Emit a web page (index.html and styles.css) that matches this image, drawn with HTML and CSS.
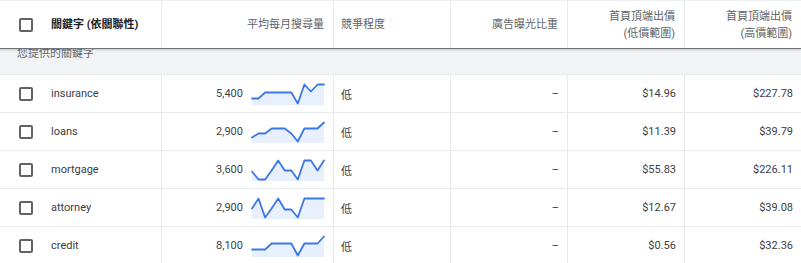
FILE: index.html
```html
<!DOCTYPE html>
<html lang="zh-Hant">
<head>
<meta charset="utf-8">
<title>關鍵字規劃工具</title>
<link rel="stylesheet" href="styles.css">
</head>
<body>
<div class="table">
  <div class="row head">
    <div class="cell first"><span class="cb"></span><span class="kw-head">關鍵字 (依關聯性)</span></div>
    <div class="cell right">平均每月搜尋量</div>
    <div class="cell left">競爭程度</div>
    <div class="cell right">廣告曝光比重</div>
    <div class="cell right">首頁頂端出價<br>(低價範圍)</div>
    <div class="cell right">首頁頂端出價<br>(高價範圍)</div>
  </div>
  <div class="group"><span class="group-label">您提供的關鍵字</span></div>

  <div class="row">
    <div class="cell first"><span class="cb"></span><span>insurance</span></div>
    <div class="cell right volume"><span>5,400</span>
      <svg class="spark" viewBox="0 0 74 22" width="74" height="22"><polygon class="area" points="1,15.5 7.5,15.5 14.1,9.5 20.6,9.5 27.2,9.5 33.7,9.5 40.3,9.5 46.8,20.5 53.4,1.5 59.9,8.5 66.5,1.5 73,1.5 73,22 1,22"/><polyline class="line" points="1,15.5 7.5,15.5 14.1,9.5 20.6,9.5 27.2,9.5 33.7,9.5 40.3,9.5 46.8,20.5 53.4,1.5 59.9,8.5 66.5,1.5 73,1.5"/></svg>
    </div>
    <div class="cell left">低</div>
    <div class="cell right">–</div>
    <div class="cell right">$14.96</div>
    <div class="cell right">$227.78</div>
  </div>

  <div class="row">
    <div class="cell first"><span class="cb"></span><span>loans</span></div>
    <div class="cell right volume"><span>2,900</span>
      <svg class="spark" viewBox="0 0 74 22" width="74" height="22"><polygon class="area" points="1,16.5 7.5,12.5 14.1,12.5 20.6,7.5 27.2,7.5 33.7,7.5 40.3,12.5 46.8,20.5 53.4,7.5 59.9,7.5 66.5,7.5 73,1.5 73,22 1,22"/><polyline class="line" points="1,16.5 7.5,12.5 14.1,12.5 20.6,7.5 27.2,7.5 33.7,7.5 40.3,12.5 46.8,20.5 53.4,7.5 59.9,7.5 66.5,7.5 73,1.5"/></svg>
    </div>
    <div class="cell left">低</div>
    <div class="cell right">–</div>
    <div class="cell right">$11.39</div>
    <div class="cell right">$39.79</div>
  </div>

  <div class="row">
    <div class="cell first"><span class="cb"></span><span>mortgage</span></div>
    <div class="cell right volume"><span>3,600</span>
      <svg class="spark" viewBox="0 0 74 22" width="74" height="22"><polygon class="area" points="1,12.5 7.5,20.5 14.1,20.5 20.6,11.5 27.2,1.5 33.7,11.5 40.3,11.5 46.8,20.5 53.4,1.5 59.9,1.5 66.5,11.5 73,1.5 73,22 1,22"/><polyline class="line" points="1,12.5 7.5,20.5 14.1,20.5 20.6,11.5 27.2,1.5 33.7,11.5 40.3,11.5 46.8,20.5 53.4,1.5 59.9,1.5 66.5,11.5 73,1.5"/></svg>
    </div>
    <div class="cell left">低</div>
    <div class="cell right">–</div>
    <div class="cell right">$55.83</div>
    <div class="cell right">$226.11</div>
  </div>

  <div class="row">
    <div class="cell first"><span class="cb"></span><span>attorney</span></div>
    <div class="cell right volume"><span>2,900</span>
      <svg class="spark" viewBox="0 0 74 22" width="74" height="22"><polygon class="area" points="1,11.5 7.5,1.5 14.1,20.5 20.6,11.5 27.2,1.5 33.7,12.5 40.3,12.5 46.8,20.5 53.4,1.5 59.9,1.5 66.5,1.5 73,1.5 73,22 1,22"/><polyline class="line" points="1,11.5 7.5,1.5 14.1,20.5 20.6,11.5 27.2,1.5 33.7,12.5 40.3,12.5 46.8,20.5 53.4,1.5 59.9,1.5 66.5,1.5 73,1.5"/></svg>
    </div>
    <div class="cell left">低</div>
    <div class="cell right">–</div>
    <div class="cell right">$12.67</div>
    <div class="cell right">$39.08</div>
  </div>

  <div class="row">
    <div class="cell first"><span class="cb"></span><span>credit</span></div>
    <div class="cell right volume"><span>8,100</span>
      <svg class="spark" viewBox="0 0 74 22" width="74" height="22"><polygon class="area" points="1,14.5 7.5,14.5 14.1,14.5 20.6,8.5 27.2,8.5 33.7,8.5 40.3,8.5 46.8,20.5 53.4,8.5 59.9,8.5 66.5,8.5 73,1.5 73,22 1,22"/><polyline class="line" points="1,14.5 7.5,14.5 14.1,14.5 20.6,8.5 27.2,8.5 33.7,8.5 40.3,8.5 46.8,20.5 53.4,8.5 59.9,8.5 66.5,8.5 73,1.5"/></svg>
    </div>
    <div class="cell left">低</div>
    <div class="cell right">–</div>
    <div class="cell right">$0.56</div>
    <div class="cell right">$32.36</div>
  </div>
</div>
</body>
</html>
```

FILE: styles.css
```css
* { box-sizing: border-box; }
html, body { margin: 0; padding: 0; background: #fff; }
body {
  font-family: Roboto, "Noto Sans CJK TC", sans-serif;
  font-size: 11px;
  color: #3c4043;
  overflow: hidden;
}
.table { width: 801px; }
.row {
  display: grid;
  grid-template-columns: 161px 172px 117px 117px 117px 117px;
  height: 38px;
  border-bottom: 1px solid #e8eaed;
}
.row.head {
  position: sticky;
  top: 0;
  z-index: 2;
  height: 49px;
  background: #fff;
  border-top: 1px solid #eceff1;
  border-bottom: 1px solid #6f7377;
  box-shadow: 0 1px 2px rgba(60, 64, 67, 0.25);
  color: #5f6368;
  line-height: 17px;
}
.cell {
  display: flex;
  align-items: center;
  border-left: 1px solid #e8eaed;
  min-width: 0;
}
.cell.first { border-left: none; padding-left: 19px; gap: 18px; }
.cell.right { justify-content: flex-end; text-align: right; padding-right: 8px; }
.cell.left { padding-left: 7px; }
.head .cell.right { padding-right: 9px; }
.kw-head { font-weight: 700; color: #202124; }
.cb {
  width: 14px;
  height: 14px;
  border: 2px solid #5f6368;
  border-radius: 2px;
  flex: none;
}
.volume { gap: 8px; }
.spark { display: block; flex: none; }
.spark .area { fill: #e8f0fe; stroke: none; }
.spark .line { fill: none; stroke: #3b78e7; stroke-width: 1.8; stroke-linejoin: round; stroke-linecap: round; }
.group {
  position: relative;
  z-index: 1;
  display: flex;
  align-items: flex-start;
  height: 26px;
  background: #f1f3f4;
  border-bottom: 1px solid #e8eaed;
  padding-left: 17px;
  color: #5f6368;
}
.group-label {
  display: block;
  line-height: 11px;
  margin-top: -1px;
}
```
